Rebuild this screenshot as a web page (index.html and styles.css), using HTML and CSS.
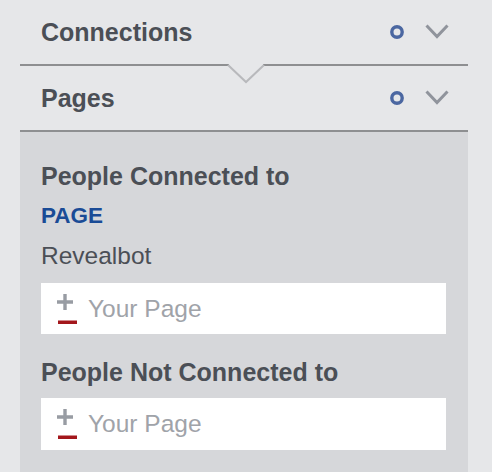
FILE: index.html
```html
<!DOCTYPE html>
<html>
<head>
<meta charset="utf-8">
<link rel="stylesheet" href="styles.css">
</head>
<body>
<div class="panel">
  <div class="section-header first">
    <span class="title">Connections</span>
    <div class="icons">
      <svg class="dot" width="14" height="14" viewBox="0 0 14 14"><circle cx="7" cy="7" r="5.2" fill="none" stroke="#4b67a1" stroke-width="3.4"/></svg>
      <svg class="chev" width="24" height="16" viewBox="0 0 24 16"><polyline points="1.5,1.5 12,12.5 22.5,1.5" fill="none" stroke="#90949c" stroke-width="3"/></svg>
    </div>
    <svg class="notch" width="38" height="22" viewBox="0 0 38 22"><rect x="2" y="0" width="34" height="4" fill="#e6e7e9"/><polyline points="1,2 19,19 37,2" fill="none" stroke="#b8b9bc" stroke-width="2"/></svg>
  </div>
  <div class="section-header">
    <span class="title">Pages</span>
    <div class="icons">
      <svg class="dot" width="14" height="14" viewBox="0 0 14 14"><circle cx="7" cy="7" r="5.2" fill="none" stroke="#4b67a1" stroke-width="3.4"/></svg>
      <svg class="chev" width="24" height="16" viewBox="0 0 24 16"><polyline points="1.5,1.5 12,12.5 22.5,1.5" fill="none" stroke="#90949c" stroke-width="3"/></svg>
    </div>
  </div>
  <div class="content">
    <div class="label">People Connected to</div>
    <div class="type">PAGE</div>
    <div class="value">Revealbot</div>
    <div class="field">
      <svg class="plus" width="20" height="30" viewBox="0 0 20 30"><path d="M8 0V16M0 8H16" stroke="#989ca3" stroke-width="3.4" fill="none"/><rect x="1" y="26.5" width="19" height="3.5" fill="#a3171c"/></svg>
      <span class="placeholder">Your Page</span>
    </div>
    <div class="label second">People Not Connected to</div>
    <div class="field tight">
      <svg class="plus" width="20" height="30" viewBox="0 0 20 30"><path d="M8 0V16M0 8H16" stroke="#989ca3" stroke-width="3.4" fill="none"/><rect x="1" y="26.5" width="19" height="3.5" fill="#a3171c"/></svg>
      <span class="placeholder">Your Page</span>
    </div>
  </div>
</div>
</body>
</html>
```
FILE: styles.css
```css
html, body {
  margin: 0;
  padding: 0;
}
body {
  background: #e6e7e9;
  font-family: "Liberation Sans", Arial, sans-serif;
  color: #4b4f56;
  width: 492px;
  height: 472px;
  overflow: hidden;
}
.panel {
  margin-left: 20px;
  width: 448px;
}
.section-header {
  position: relative;
  height: 64px;
  border-bottom: 2px solid #8e8f91;
  display: flex;
  align-items: center;
  justify-content: space-between;
  padding: 0 19px 0 21px;
}
.title {
  font-size: 25px;
  line-height: 28px;
  font-weight: bold;
}
.icons {
  display: flex;
  align-items: center;
  gap: 21px;
}
.dot {
  display: block;
}
.chev {
  display: block;
}
.notch {
  position: absolute;
  left: 207px;
  top: 63px;
}
.content {
  box-sizing: border-box;
  background: #d6d7da;
  height: 340px;
  padding: 24px 22px 0 21px;
  display: flex;
  flex-direction: column;
}
.label {
  font-size: 25px;
  line-height: 40px;
  font-weight: bold;
}
.label.second {
  margin-top: 18px;
}
.type {
  font-size: 22.5px;
  line-height: 40px;
  font-weight: bold;
  color: #1a4b96;
}
.value {
  font-size: 24.5px;
  line-height: 40px;
}
.field {
  margin-top: 7px;
  height: 51px;
  flex-shrink: 0;
  background: #ffffff;
  display: flex;
  align-items: center;
  padding-left: 16px;
  gap: 11px;
}
.field.tight {
  margin-top: 6px;
  height: 52px;
}
.plus {
  display: block;
}
.placeholder {
  font-size: 24.5px;
  line-height: 28px;
  color: #a0a3a9;
}
```
